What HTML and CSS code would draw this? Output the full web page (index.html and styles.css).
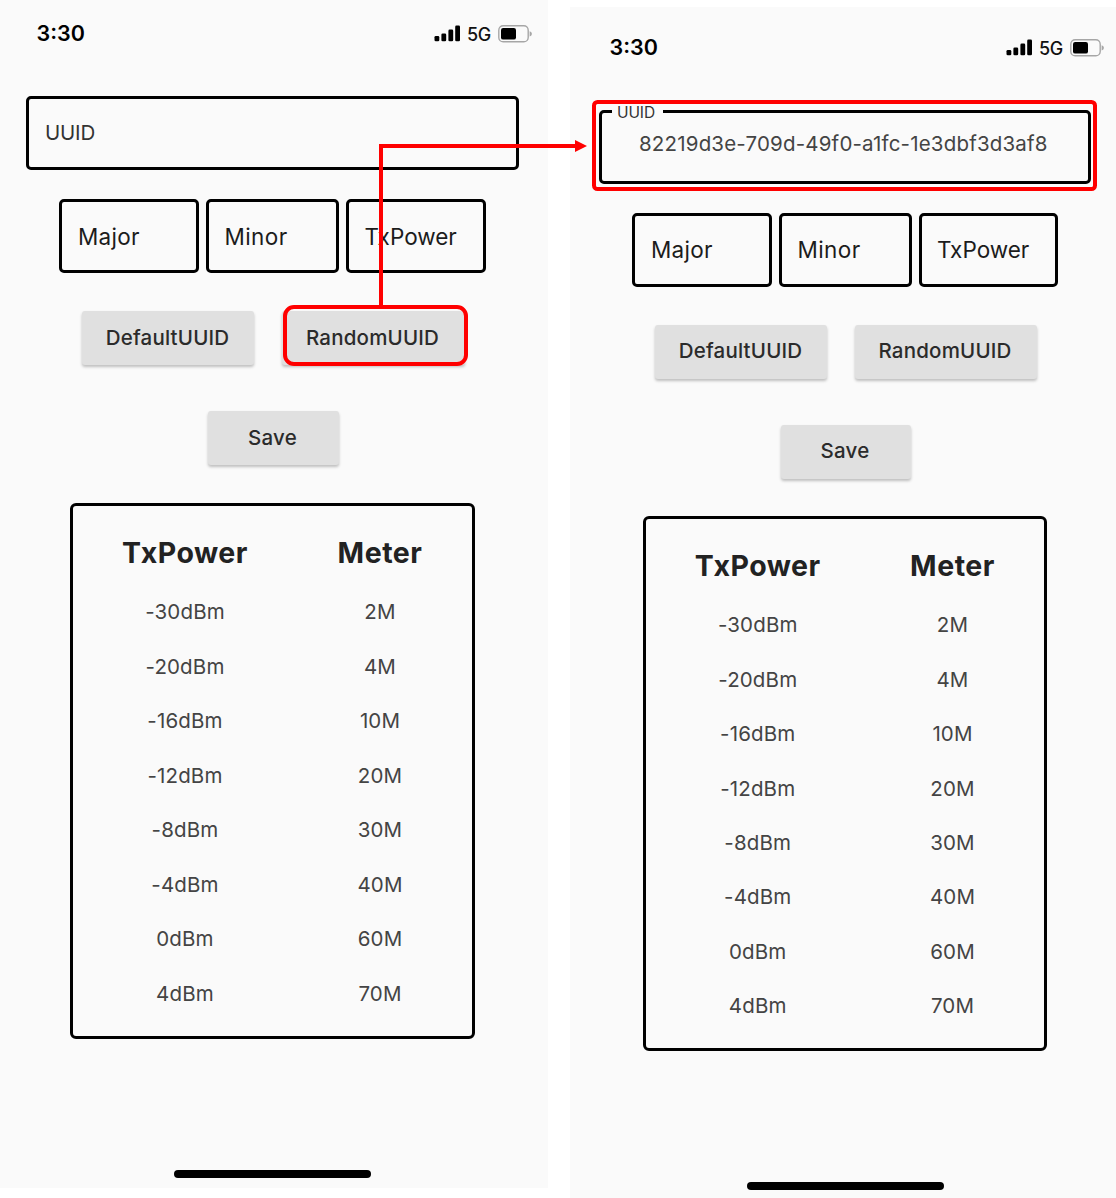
FILE: index.html
```html
<!DOCTYPE html>
<html lang="en">
<head>
<meta charset="utf-8">
<title>Beacon settings</title>
<link rel="stylesheet" href="styles.css">
</head>
<body>
<main class="stage">
  <section class="phone phone-before">
    <div class="screen">
      <header class="status">
        <span class="clock">3:30</span>
        <span class="indicators">
          <svg class="signal" width="27" height="17" viewBox="0 0 27 17"><rect x="0.5" y="11" width="4.8" height="5.2" rx="1.3"/><rect x="7.4" y="8.4" width="4.8" height="7.8" rx="1.3"/><rect x="14.4" y="4.6" width="4.8" height="11.6" rx="1.3"/><rect x="21.2" y="0.6" width="4.8" height="15.6" rx="1.3"/></svg>
          <span class="network">5G</span>
          <svg class="battery" width="35" height="18" viewBox="0 0 35 18"><rect x="0.8" y="0.8" width="29.4" height="16" rx="4.4" fill="none" stroke="#a6a6a6" stroke-width="1.4"/><rect x="3" y="3" width="15" height="11.6" rx="2.2"/><path d="M31.6 6.2c3 .7 3 4.500 0 5.200z" fill="#a6a6a6"/></svg>
        </span>
      </header>
      <div class="field uuid-field"><span class="placeholder">UUID</span></div>
      <div class="field-row">
        <div class="field major">Major</div>
        <div class="field minor">Minor</div>
        <div class="field power">TxPower</div>
      </div>
      <div class="button-row">
        <button class="button default">DefaultUUID</button>
        <button class="button random">RandomUUID</button>
      </div>
      <button class="button save">Save</button>
      <div class="table">
        <div class="line head"><span>TxPower</span><span>Meter</span></div>
        <div class="line"><span>-30dBm</span><span>2M</span></div>
        <div class="line"><span>-20dBm</span><span>4M</span></div>
        <div class="line"><span>-16dBm</span><span>10M</span></div>
        <div class="line"><span>-12dBm</span><span>20M</span></div>
        <div class="line"><span>-8dBm</span><span>30M</span></div>
        <div class="line"><span>-4dBm</span><span>40M</span></div>
        <div class="line"><span>0dBm</span><span>60M</span></div>
        <div class="line"><span>4dBm</span><span>70M</span></div>
      </div>
      <div class="home"></div>
    </div>
  </section>
  <section class="phone phone-after">
    <div class="screen">
      <header class="status">
        <span class="clock">3:30</span>
        <span class="indicators">
          <svg class="signal" width="27" height="17" viewBox="0 0 27 17"><rect x="0.5" y="11" width="4.8" height="5.2" rx="1.3"/><rect x="7.4" y="8.4" width="4.8" height="7.8" rx="1.3"/><rect x="14.4" y="4.6" width="4.8" height="11.6" rx="1.3"/><rect x="21.2" y="0.6" width="4.8" height="15.6" rx="1.3"/></svg>
          <span class="network">5G</span>
          <svg class="battery" width="35" height="18" viewBox="0 0 35 18"><rect x="0.8" y="0.8" width="29.4" height="16" rx="4.4" fill="none" stroke="#a6a6a6" stroke-width="1.4"/><rect x="3" y="3" width="15" height="11.6" rx="2.2"/><path d="M31.6 6.2c3 .7 3 4.500 0 5.200z" fill="#a6a6a6"/></svg>
        </span>
      </header>
      <div class="field uuid-field filled"><span class="floating">UUID</span><span class="value">82219d3e-709d-49f0-a1fc-1e3dbf3d3af8</span></div>
      <div class="field-row">
        <div class="field major">Major</div>
        <div class="field minor">Minor</div>
        <div class="field power">TxPower</div>
      </div>
      <div class="button-row">
        <button class="button default">DefaultUUID</button>
        <button class="button random">RandomUUID</button>
      </div>
      <button class="button save">Save</button>
      <div class="table">
        <div class="line head"><span>TxPower</span><span>Meter</span></div>
        <div class="line"><span>-30dBm</span><span>2M</span></div>
        <div class="line"><span>-20dBm</span><span>4M</span></div>
        <div class="line"><span>-16dBm</span><span>10M</span></div>
        <div class="line"><span>-12dBm</span><span>20M</span></div>
        <div class="line"><span>-8dBm</span><span>30M</span></div>
        <div class="line"><span>-4dBm</span><span>40M</span></div>
        <div class="line"><span>0dBm</span><span>60M</span></div>
        <div class="line"><span>4dBm</span><span>70M</span></div>
      </div>
      <div class="home"></div>
    </div>
  </section>
  <svg class="callout" width="1116" height="1198" viewBox="0 0 1116 1198" fill="none" stroke="#f00" stroke-width="4">
    <rect x="285" y="307" width="181" height="57" rx="9"/>
    <path d="M381 305V146H576"/>
    <path d="M575 140l12 6-12 6z" fill="#f00" stroke="none"/>
    <rect x="594" y="102" width="501" height="87" rx="3.500"/>
  </svg>
</main>
</body>
</html>
```
FILE: styles.css
```css
* { box-sizing: border-box; }
body { margin: 0; background: #fff; font-family: Inter, "Liberation Sans", sans-serif; }
.stage { position: relative; display: flex; align-items: flex-start; gap: 22px; width: 1116px; height: 1198px; overflow: hidden; }
.phone { flex: none; background: #fafafa; overflow: hidden; }
.phone-before { width: 548px; height: 1188px; }
.phone-after { width: 546px; height: 1191px; margin-top: 7px; padding: 6px 0 0 3px; }
.screen { display: flex; flex-direction: column; width: 546px; }

.status { display: flex; justify-content: space-between; align-items: center; height: 68px; padding: 0 13px 0 36.500px; }
.phone-after .status { height: 69px; padding-right: 14px; }
.clock { padding-bottom: 2px; font-size: 21.5px; font-weight: 600; letter-spacing: 0; color: #000; }
.indicators { display: flex; align-items: center; }
.phone-before .indicators { padding-bottom: 1px; }
.network { width: 24px; margin: 1px 7px 0 6px; font-size: 18px; font-weight: 500; letter-spacing: -0.4px; color: #111; }

.field { display: flex; align-items: center; height: 74px; border: 3px solid #000; border-radius: 5px; padding: 0 0 0 16px; font-size: 22.500px; letter-spacing: 0.3px; color: #1c1c1c; }
.phone-after .field { padding-bottom: 2px; }
.uuid-field { position: relative; width: 493px; margin: 28px 0 0 26px; }
.placeholder { padding-bottom: 2px; font-size: 20.500px; letter-spacing: -0.2px; color: #333; }
.phone-after .filled { width: 492px; padding: 0 0 7px 37px; }
.floating { position: absolute; left: 10px; top: -10px; width: 51px; padding-left: 5px; line-height: 20px; font-size: 15.500px; letter-spacing: -0.1px; background: #fafafa; color: #333; }
.value { font-size: 20.500px; letter-spacing: 0.180px; color: #444; white-space: nowrap; }

.field-row { display: flex; gap: 7px; margin: 29px 0 0 59px; }
.major { width: 140px; }
.minor { width: 133px; padding-left: 15.500px; letter-spacing: 0.4px; }
.power { width: 140px; padding-left: 15.500px; letter-spacing: 0; }
.phone-after .power { width: 139px; padding-left: 15px; }

.button-row { display: flex; gap: 28px; margin: 38px 0 0 82px; }
.button { height: 54px; border: 0; border-radius: 3px; padding: 0 1px 2px 0; background: #e0e0e0; box-shadow: 0 2px 3px rgba(0, 0, 0, .24); font: 500 20.500px Inter, sans-serif; letter-spacing: 0.2px; color: #2b2b2b; }
.default { width: 172px; }
.random { width: 183px; padding-right: 2px; }
.save { width: 131px; margin: 46px 0 0 208px; padding-right: 2px; }
.phone-after .button { padding-bottom: 3px; }
.phone-after .button-row { margin-top: 37.500px; }
.phone-after .random { width: 182px; }
.phone-after .save { width: 130px; margin-top: 46px; }

.table { width: 405px; height: 536px; margin: 38px 0 0 70px; border: 3px solid #000; border-radius: 6px; padding: 16px 0 0 14px; }
.phone-after .table { width: 404px; height: 535px; margin-top: 37.500px; }
.line { display: grid; grid-template-columns: 196px 194px; height: 54.500px; align-items: center; text-align: center; font-size: 20.500px; letter-spacing: 0.150px; color: #444; }
.phone-after .line { grid-template-columns: 195.500px 194px; height: 54.400px; }
.head { height: 62.500px; padding-bottom: 1.500px; font-size: 28.500px; font-weight: 700; letter-spacing: 0.5px; color: #222; }
.phone-after .head { height: 62.800px; padding-bottom: 2.300px; }
.home { width: 197px; height: 8px; margin: 130.500px 0 0 174px; border-radius: 4px; background: #000; }

.callout { position: absolute; left: 0; top: 0; }
```
